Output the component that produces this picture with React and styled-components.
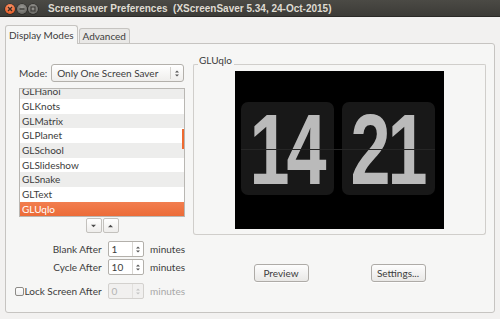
import React from 'react';
import styled, { createGlobalStyle } from 'styled-components';

const GlobalStyle = createGlobalStyle`
  html, body {
    margin: 0;
    padding: 0;
  }
  body {
    background: #f2f1f0;
    font-family: Lato, 'Liberation Sans', sans-serif;
    font-size: 10px;
    color: #3c3c3c;
  }
`;

const savers = [
  'GLHanoi',
  'GLKnots',
  'GLMatrix',
  'GLPlanet',
  'GLSchool',
  'GLSlideshow',
  'GLSnake',
  'GLText',
  'GLUqlo',
];

const Tri = ({ dir = 'down', size = 5, color = '#4c4c4c' }) => (
  <svg width={size} height={Math.ceil(size / 2) + 1} viewBox='0 0 6 4'>
    {dir === 'down' ? (
      <polygon points='0,0.5 6,0.5 3,3.5' fill={color} />
    ) : (
      <polygon points='0,3.5 6,3.5 3,0.5' fill={color} />
    )}
  </svg>
);

const WinIcon = ({ kind }) => (
  <svg width='6' height='6' viewBox='0 0 6 6'>
    {kind === 'close' && (
      <path d='M1 1 L5 5 M5 1 L1 5' stroke='#3a2a22' strokeWidth='1.4' />
    )}
    {kind === 'min' && <path d='M0.5 3 H5.5' stroke='#3c3b37' strokeWidth='1.4' />}
    {kind === 'max' && (
      <rect x='1' y='1' width='4' height='4' fill='none' stroke='#3c3b37' strokeWidth='1.2' />
    )}
  </svg>
);

const Spin = ({ value, disabled }) => (
  <SpinField $disabled={disabled}>
    <SpinValue>{value}</SpinValue>
    <SpinButtons $disabled={disabled}>
      <Tri dir='up' size={4} color={disabled ? '#c4c4c4' : '#555'} />
      <Tri dir='down' size={4} color={disabled ? '#c4c4c4' : '#555'} />
    </SpinButtons>
  </SpinField>
);

const App = () => {
  return (
    <>
      <GlobalStyle />
      <Window>
        <TitleBar>
          <WinButtons>
            <WinButton $kind='close'>
              <WinIcon kind='close' />
            </WinButton>
            <WinButton>
              <WinIcon kind='min' />
            </WinButton>
            <WinButton>
              <WinIcon kind='max' />
            </WinButton>
          </WinButtons>
          <Title>Screensaver Preferences&nbsp; (XScreenSaver 5.34, 24-Oct-2015)</Title>
        </TitleBar>
        <Body>
          <TabRow>
            <Tab $active>Display Modes</Tab>
            <Tab>Advanced</Tab>
          </TabRow>
          <Panel>
            <LeftColumn>
              <ModeRow>
                <span>Mode:</span>
                <Combo>
                  <ComboText>Only One Screen Saver</ComboText>
                  <ComboArrows>
                    <Tri dir='up' size={4} color='#555' />
                    <Tri dir='down' size={4} color='#555' />
                  </ComboArrows>
                </Combo>
              </ModeRow>
              <ListBox>
                <ListInner>
                  {savers.map((name, i) => (
                    <ListRow
                      key={name}
                      $selected={name === 'GLUqlo'}
                      $odd={i % 2 === 0}>
                      {name}
                    </ListRow>
                  ))}
                </ListInner>
                <ScrollThumb />
              </ListBox>
              <ArrowRow>
                <ArrowButton>
                  <Tri dir='down' />
                </ArrowButton>
                <ArrowButton>
                  <Tri dir='up' />
                </ArrowButton>
              </ArrowRow>
              <SettingRow $top={8}>
                <SettingLabel>Blank After</SettingLabel>
                <Spin value='1' />
                <Minutes>minutes</Minutes>
              </SettingRow>
              <SettingRow $top={2}>
                <SettingLabel>Cycle After</SettingLabel>
                <Spin value='10' />
                <Minutes>minutes</Minutes>
              </SettingRow>
              <SettingRow $top={8}>
                <SettingLabel $spread>
                  <CheckBox />
                  <span>Lock Screen After</span>
                </SettingLabel>
                <Spin value='0' disabled />
                <Minutes $disabled>minutes</Minutes>
              </SettingRow>
            </LeftColumn>
            <RightColumn>
              <FrameTop>
                <FrameEdge $side='left' />
                <FrameLabel>GLUqlo</FrameLabel>
                <FrameEdge $side='right' />
              </FrameTop>
              <FrameBody>
                <Preview>
                  <Clock>
                    <FlipCard>
                      <Digits>14</Digits>
                    </FlipCard>
                    <FlipCard>
                      <Digits>21</Digits>
                    </FlipCard>
                    <Hinge />
                  </Clock>
                </Preview>
              </FrameBody>
              <ButtonRow>
                <PushButton>Preview</PushButton>
                <PushButton>Settings...</PushButton>
              </ButtonRow>
            </RightColumn>
          </Panel>
        </Body>
      </Window>
    </>
  );
};

const Window = styled.div`
  width: 500px;
  height: 319px;
  display: flex;
  flex-direction: column;
  background: #f2f1f0;
  overflow: hidden;
`;

const TitleBar = styled.div`
  height: 17px;
  flex: none;
  box-sizing: border-box;
  display: flex;
  align-items: center;
  padding-left: 5px;
  background: linear-gradient(#4b4a45, #3c3b37);
  border-bottom: 1px solid #2b2a27;
`;

const WinButtons = styled.div`
  display: flex;
  gap: 1.5px;
  margin-top: 1px;
`;

const WinButton = styled.div`
  width: 10px;
  height: 10px;
  border-radius: 50%;
  display: flex;
  align-items: center;
  justify-content: center;
  box-shadow: 0 0 0 0.5px rgba(0, 0, 0, 0.5);
  background: ${({ $kind }) =>
    $kind === 'close'
      ? 'radial-gradient(circle at 50% 35%, #f9a07a, #e8602a 70%)'
      : 'radial-gradient(circle at 50% 35%, #9b9a95, #6d6c68 70%)'};
`;

const Title = styled.div`
  margin-left: 10px;
  font-family: 'Liberation Sans', Arial, sans-serif;
  font-weight: bold;
  font-size: 10px;
  color: #dfdbd2;
  white-space: nowrap;
`;

const Body = styled.div`
  flex: 1;
  display: flex;
  flex-direction: column;
  padding: 8px 5px 6px;
`;

const TabRow = styled.div`
  display: flex;
  align-items: flex-end;
  height: 18px;
  gap: 1px;
  position: relative;
  z-index: 1;
`;

const Tab = styled.div`
  box-sizing: border-box;
  height: ${({ $active }) => ($active ? '19px' : '15px')};
  margin-bottom: ${({ $active }) => ($active ? '-1px' : '0')};
  padding: 0 3px;
  display: flex;
  align-items: center;
  border: 1px solid #c6c4c1;
  border-bottom: none;
  border-radius: 3px 3px 0 0;
  background: ${({ $active }) => ($active ? '#f6f6f5' : '#e9e8e6')};
  color: #3c3c3c;
  white-space: nowrap;
`;

const Panel = styled.div`
  box-sizing: border-box;
  height: 270px;
  display: flex;
  align-items: flex-start;
  gap: 8px;
  padding: 10px 8px 0 8px;
  background: #f6f6f5;
  border: 1px solid #c6c4c1;
  border-radius: 0 3px 3px 3px;
`;

const LeftColumn = styled.div`
  width: 171px;
  padding-top: 10px;
  display: flex;
  flex-direction: column;
`;

const ModeRow = styled.div`
  margin-left: 5px;
  height: 18px;
  display: flex;
  align-items: center;
  gap: 4px;
`;

const Combo = styled.div`
  box-sizing: border-box;
  width: 133px;
  height: 18px;
  display: flex;
  align-items: center;
  border: 1px solid #b3b0ab;
  border-radius: 3px;
  background: linear-gradient(#ffffff, #efeeec);
`;

const ComboText = styled.div`
  flex: 1;
  padding-left: 5px;
  white-space: nowrap;
`;

const ComboArrows = styled.div`
  width: 12px;
  height: 12px;
  border-left: 1px solid #d4d2ce;
  display: flex;
  flex-direction: column;
  align-items: center;
  justify-content: center;
  gap: 1px;
`;

const ListBox = styled.div`
  box-sizing: border-box;
  position: relative;
  margin: 6px 0 0 5px;
  width: 166px;
  height: 129px;
  border: 1px solid #b9b7b3;
  background: #ffffff;
  overflow: hidden;
`;

const ListInner = styled.div`
  margin-top: -4.7px;
`;

const ListRow = styled.div`
  height: 14.7px;
  line-height: 14.7px;
  padding-left: 2px;
  white-space: nowrap;
  color: ${({ $selected }) => ($selected ? '#ffffff' : '#3c3c3c')};
  background: ${({ $selected, $odd }) =>
    $selected
      ? 'linear-gradient(#f27e4f, #eb6a36)'
      : $odd
      ? '#ededec'
      : '#ffffff'};
`;

const ScrollThumb = styled.div`
  position: absolute;
  right: 0;
  top: 40px;
  width: 2px;
  height: 20px;
  background: #ee6a30;
`;

const ArrowRow = styled.div`
  margin: 1px 0 0 5px;
  width: 166px;
  display: flex;
  justify-content: center;
  gap: 1px;
`;

const ArrowButton = styled.div`
  box-sizing: border-box;
  width: 16px;
  height: 15px;
  display: flex;
  align-items: center;
  justify-content: center;
  border: 1px solid #c3c1bd;
  border-radius: 2px;
  background: linear-gradient(#ffffff, #eeedeb);
`;

const SettingRow = styled.div`
  margin-top: ${({ $top }) => $top}px;
  height: 16px;
  display: flex;
  align-items: center;
`;

const SettingLabel = styled.div`
  box-sizing: border-box;
  width: 89px;
  padding-left: 1px;
  display: flex;
  align-items: center;
  justify-content: ${({ $spread }) => ($spread ? 'space-between' : 'flex-end')};
  white-space: nowrap;
`;

const CheckBox = styled.div`
  box-sizing: border-box;
  width: 9px;
  height: 9px;
  border: 1px solid #8d8b87;
  border-radius: 2px;
  background: linear-gradient(#ffffff, #eeeeee);
`;

const SpinField = styled.div`
  box-sizing: border-box;
  margin-left: 6px;
  width: 37px;
  height: 16px;
  display: flex;
  align-items: center;
  border: 1px solid ${({ $disabled }) => ($disabled ? '#d3d1ce' : '#b3b0ab')};
  border-radius: 2px;
  background: ${({ $disabled }) => ($disabled ? '#f1f0ef' : '#ffffff')};
  color: ${({ $disabled }) => ($disabled ? '#b3b3b3' : '#3c3c3c')};
`;

const SpinValue = styled.div`
  flex: 1;
  padding-left: 3px;
`;

const SpinButtons = styled.div`
  width: 10px;
  height: 14px;
  border-left: 1px solid ${({ $disabled }) => ($disabled ? '#e2e0dd' : '#d8d6d2')};
  display: flex;
  flex-direction: column;
  align-items: center;
  justify-content: center;
  gap: 1px;
`;

const Minutes = styled.div`
  margin-left: 6px;
  color: ${({ $disabled }) => ($disabled ? '#a8a8a8' : '#3c3c3c')};
`;

const RightColumn = styled.div`
  width: 293px;
  display: flex;
  flex-direction: column;
`;

const FrameTop = styled.div`
  height: 12px;
  display: flex;
  align-items: flex-start;
`;

const FrameEdge = styled.div`
  box-sizing: border-box;
  margin-top: 10px;
  height: 2px;
  width: ${({ $side }) => ($side === 'left' ? '5px' : 'auto')};
  flex: ${({ $side }) => ($side === 'left' ? 'none' : '1')};
  border-top: 1px solid #d0cecb;
  ${({ $side }) =>
    $side === 'left'
      ? 'border-left: 1px solid #d0cecb; border-top-left-radius: 3px;'
      : 'border-right: 1px solid #d0cecb; border-top-right-radius: 3px;'}
`;

const FrameLabel = styled.div`
  padding: 0 2px 0 1px;
  line-height: 12px;
  color: #3c3c3c;
`;

const FrameBody = styled.div`
  padding: 5px 0;
  border: 1px solid #d0cecb;
  border-top: none;
  border-radius: 0 0 3px 3px;
`;

const Preview = styled.div`
  width: 209px;
  height: 158px;
  margin: 0 auto;
  box-sizing: border-box;
  padding: 31px 0 0 6px;
  background: #000000;
`;

const Clock = styled.div`
  position: relative;
  display: flex;
  gap: 8px;
  width: 194px;
`;

const FlipCard = styled.div`
  width: 93px;
  height: 93px;
  border-radius: 7px;
  background: #181818;
  display: flex;
  align-items: center;
  justify-content: center;
`;

const Digits = styled.span`
  display: inline-block;
  font-family: 'Liberation Sans', Arial, sans-serif;
  font-weight: bold;
  font-size: 100px;
  line-height: 72px;
  height: 72px;
  letter-spacing: -4px;
  color: #bababa;
  transform: scaleX(0.72);
  margin-left: -2px;
`;

const Hinge = styled.div`
  position: absolute;
  left: 0;
  right: 0;
  top: 47px;
  height: 1px;
  background: #262626;
`;

const ButtonRow = styled.div`
  margin-top: 29px;
  display: flex;
  justify-content: center;
  gap: 62px;
`;

const PushButton = styled.button`
  box-sizing: border-box;
  width: 55px;
  height: 18px;
  padding: 0;
  font-family: inherit;
  font-size: 10px;
  color: #3c3c3c;
  border: 1px solid #aeaba7;
  border-radius: 3px;
  background: linear-gradient(#fdfdfd, #e9e8e6);
  box-shadow: 0 1px 0 rgba(255, 255, 255, 0.8);
`;

export default App;
